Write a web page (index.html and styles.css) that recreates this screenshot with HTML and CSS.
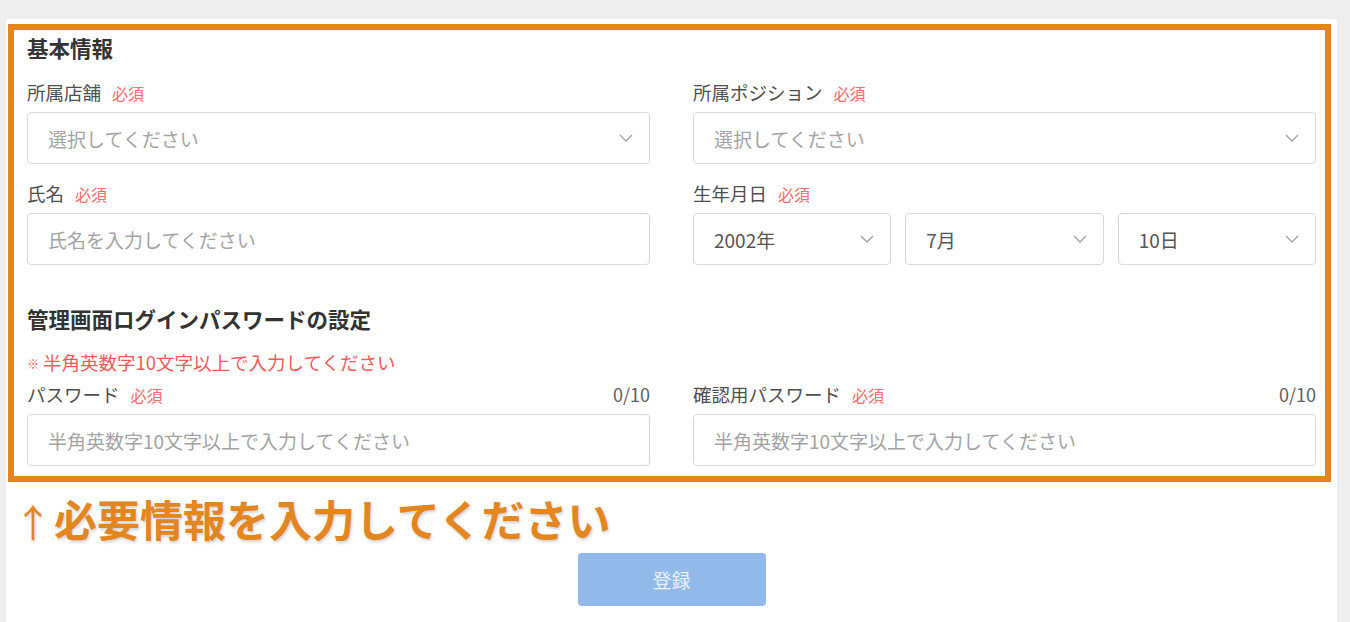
FILE: index.html
```html
<!DOCTYPE html>
<html lang="ja">
<head>
<meta charset="utf-8">
<title>基本情報</title>
<link rel="stylesheet" href="styles.css">
</head>
<body>
<div class="card">
  <div class="highlight">
    <h2 class="section-title">基本情報</h2>
    <div class="grid">
      <div class="field">
        <div class="label-row"><span class="label">所属店舗</span><span class="req">必須</span></div>
        <div class="select"><span class="placeholder">選択してください</span>
          <svg class="chev" viewBox="0 0 14 8"><path d="M1 1 L7 7 L13 1"/></svg></div>
      </div>
      <div class="field">
        <div class="label-row"><span class="label">所属ポジション</span><span class="req">必須</span></div>
        <div class="select"><span class="placeholder">選択してください</span>
          <svg class="chev" viewBox="0 0 14 8"><path d="M1 1 L7 7 L13 1"/></svg></div>
      </div>
      <div class="field">
        <div class="label-row"><span class="label">氏名</span><span class="req">必須</span></div>
        <input class="input" type="text" placeholder="氏名を入力してください">
      </div>
      <div class="field">
        <div class="label-row"><span class="label">生年月日</span><span class="req">必須</span></div>
        <div class="date-row">
          <div class="select"><span class="value">2002年</span>
            <svg class="chev" viewBox="0 0 14 8"><path d="M1 1 L7 7 L13 1"/></svg></div>
          <div class="select"><span class="value">7月</span>
            <svg class="chev" viewBox="0 0 14 8"><path d="M1 1 L7 7 L13 1"/></svg></div>
          <div class="select"><span class="value">10日</span>
            <svg class="chev" viewBox="0 0 14 8"><path d="M1 1 L7 7 L13 1"/></svg></div>
        </div>
      </div>
    </div>

    <h2 class="section-title second">管理画面ログインパスワードの設定</h2>
    <p class="note"><span class="kome">※</span>半角英数字10文字以上で入力してください</p>
    <div class="grid pw-grid">
      <div class="field">
        <div class="label-row"><span class="label">パスワード</span><span class="req">必須</span><span class="count">0/10</span></div>
        <input class="input" type="password" placeholder="半角英数字10文字以上で入力してください">
      </div>
      <div class="field">
        <div class="label-row"><span class="label">確認用パスワード</span><span class="req">必須</span><span class="count">0/10</span></div>
        <input class="input" type="password" placeholder="半角英数字10文字以上で入力してください">
      </div>
    </div>
  </div>

  <p class="callout"><span class="arrow">↑</span>必要情報を入力してください</p>
  <div class="actions"><button class="submit" type="button">登録</button></div>
</div>
</body>
</html>
```

FILE: styles.css
```css
html, body {
  margin: 0;
  padding: 0;
}
body {
  background: #eeeeee;
  padding: 19px 13px 0 6px;
  font-family: "Noto Sans CJK JP", "Noto Sans", sans-serif;
  color: #555;
  height: 622px;
  box-sizing: border-box;
  overflow: hidden;
}
.card {
  background: #fff;
  border-radius: 4px 4px 0 0;
  height: 620px;
  padding-top: 5px;
  box-sizing: border-box;
}
.highlight {
  margin: 0 6px 0 2px;
  border: 6px solid #e4861f;
  padding: 5px 9px 10px 13px;
}
.section-title {
  margin: 0;
  font-size: 21.5px;
  line-height: 26px;
  font-weight: 700;
  color: #333;
}
.section-title.second {
  margin-top: 41px;
}
.grid {
  display: grid;
  grid-template-columns: 1fr 1fr;
  column-gap: 43px;
  row-gap: 17px;
  margin-top: 19px;
}
.grid.pw-grid {
  margin-top: 6px;
}
.field {
  display: flex;
  flex-direction: column;
  gap: 8px;
}
.label-row {
  display: flex;
  align-items: baseline;
  height: 24px;
  line-height: 24px;
}
.label {
  font-size: 18.5px;
  color: #4f4f4f;
}
.req {
  font-size: 16px;
  color: #f56c6c;
  margin-left: 11px;
}
.count {
  margin-left: auto;
  font-size: 18px;
  color: #606060;
}
.select, .input {
  box-sizing: border-box;
  height: 52px;
  border: 1px solid #d6d8dc;
  border-radius: 4px;
  background: #fff;
  font-family: "Noto Sans CJK JP", "Noto Sans", sans-serif;
  font-size: 19px;
}
.select {
  display: flex;
  align-items: center;
  justify-content: space-between;
  padding: 0 16px 0 20px;
}
.input {
  width: 100%;
  padding: 0 20px;
  color: #555;
  outline: none;
}
.input::placeholder {
  color: #a3a3a3;
}
.placeholder {
  color: #a3a3a3;
}
.value {
  color: #555;
}
.chev {
  width: 14px;
  height: 8px;
  fill: none;
  stroke: #a0a0a0;
  stroke-width: 1.3;
}
.date-row {
  display: grid;
  grid-template-columns: 1fr 1fr 1fr;
  gap: 14px;
}
.note {
  margin: 18px 0 0;
  font-size: 18.5px;
  line-height: 24px;
  color: #f05a5a;
}
.kome {
  font-size: 12px;
  margin-right: 4px;
  vertical-align: 1px;
}
.callout {
  margin: 11px 0 0 8px;
  font-size: 43px;
  line-height: 50px;
  font-weight: 700;
  color: #e4861f;
  text-shadow: 1px 2px 3px rgba(0, 0, 0, 0.18);
}
.arrow {
  font-weight: 400;
  font-size: 38px;
  margin-right: 2px;
}
.actions {
  display: flex;
  justify-content: center;
  margin-top: 7px;
}
.submit {
  width: 188px;
  height: 53px;
  border: none;
  border-radius: 4px;
  background: #91b9ea;
  color: #e9f1fc;
  font-family: "Noto Sans CJK JP", "Noto Sans", sans-serif;
  font-size: 19px;
}
```
